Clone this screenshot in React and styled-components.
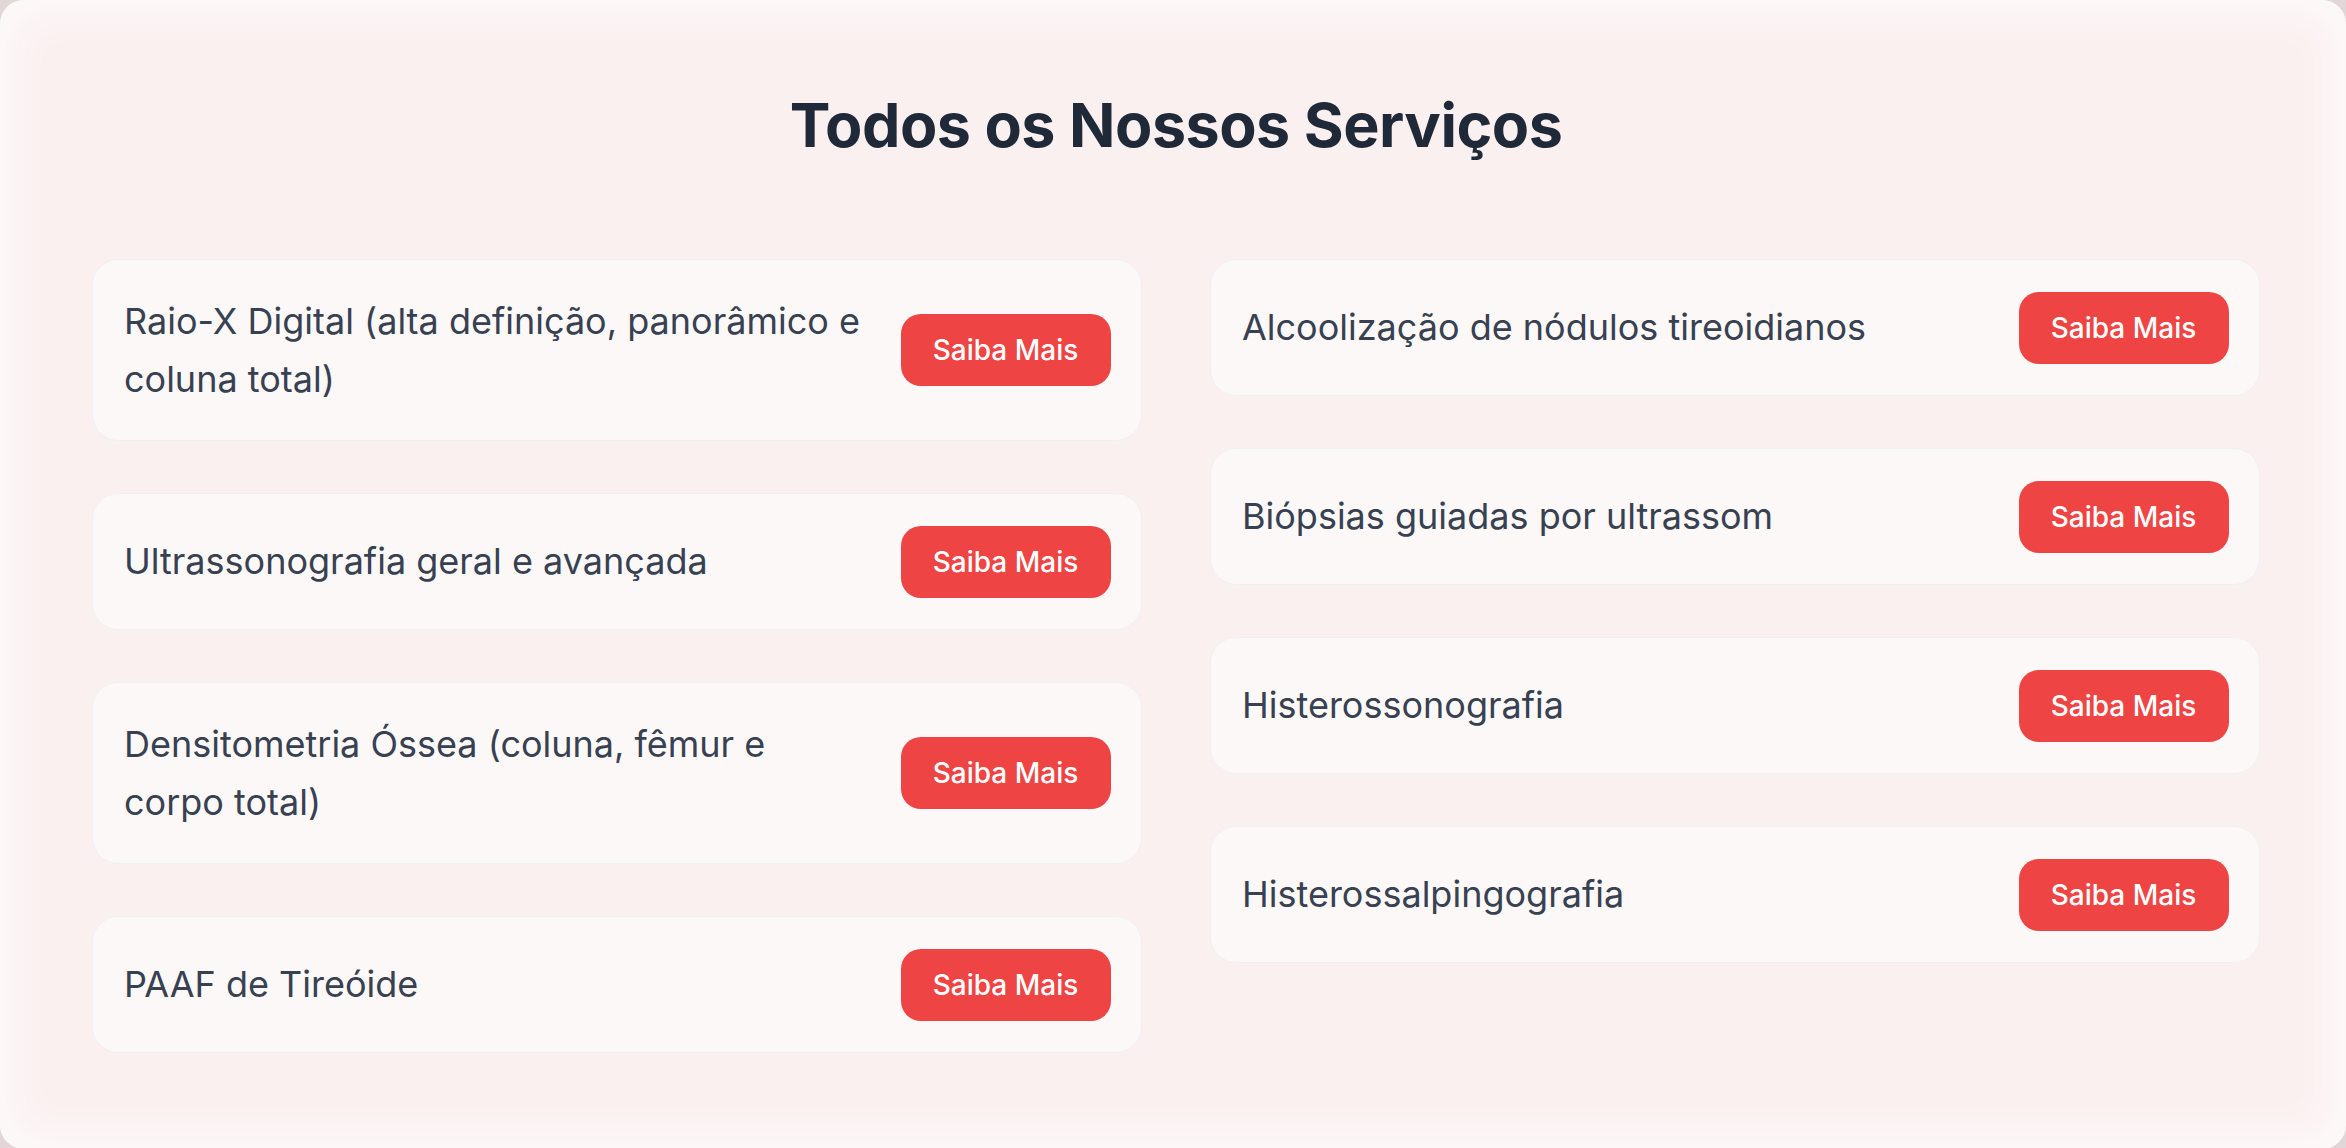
import React from "react";
import styled, { createGlobalStyle } from "styled-components";

const GlobalStyle = createGlobalStyle`
  html, body {
    margin: 0;
    padding: 0;
    background: #e3d6d6;
  }
  body {
    font-family: Inter, "Noto Sans", sans-serif;
  }
  * {
    box-sizing: border-box;
  }
`;

const Panel = styled.section`
  min-height: 100vh;
  background-color: #fbf0f0;
  border-radius: 24px;
  box-shadow: inset 0 0 44px 12px rgba(255, 255, 255, 0.7);
  padding: 95px 86px 96px 92px;
  display: flex;
  flex-direction: column;
  align-items: center;
`;

const Title = styled.h2`
  margin: 0 0 103px;
  font-size: 61px;
  line-height: 1;
  font-weight: 700;
  color: #1f2937;
  letter-spacing: -0.5px;
  text-align: center;
`;

const Columns = styled.div`
  width: 100%;
  display: grid;
  grid-template-columns: 1fr 1fr;
  column-gap: 68px;
  align-items: start;
`;

const Column = styled.div`
  display: flex;
  flex-direction: column;
  gap: 52px;
`;

const Card = styled.div`
  display: flex;
  align-items: center;
  justify-content: space-between;
  gap: 32px;
  padding: 31.5px 30.5px 31.5px 31px;
  background-color: #fdf8f8;
  border: 1px solid #eff0f3;
  border-radius: 26px;
`;

const Label = styled.span`
  font-size: 36px;
  line-height: 1.625;
  color: #374151;
  max-width: 760px;
`;

const Button = styled.button`
  flex-shrink: 0;
  width: 210px;
  height: 72px;
  margin-left: -2px;
  border: none;
  border-radius: 20px;
  background-color: #ef4444;
  color: #ffffff;
  font-family: Inter, sans-serif;
  font-size: 28px;
  font-weight: 500;
  cursor: pointer;
`;

const left = [
  "Raio-X Digital (alta definição, panorâmico e coluna total)",
  "Ultrassonografia geral e avançada",
  "Densitometria Óssea (coluna, fêmur e corpo total)",
  "PAAF de Tireóide",
];

const right = [
  "Alcoolização de nódulos tireoidianos",
  "Biópsias guiadas por ultrassom",
  "Histerossonografia",
  "Histerossalpingografia",
];

const ServiceCard = ({ name }) => (
  <Card>
    <Label>{name}</Label>
    <Button>Saiba Mais</Button>
  </Card>
);

const App = () => {
  return (
    <>
      <GlobalStyle />
      <Panel>
        <Title>Todos os Nossos Serviços</Title>
        <Columns>
          <Column>
            {left.map((s) => (
              <ServiceCard key={s} name={s} />
            ))}
          </Column>
          <Column>
            {right.map((s) => (
              <ServiceCard key={s} name={s} />
            ))}
          </Column>
        </Columns>
      </Panel>
    </>
  );
};

export default App;
